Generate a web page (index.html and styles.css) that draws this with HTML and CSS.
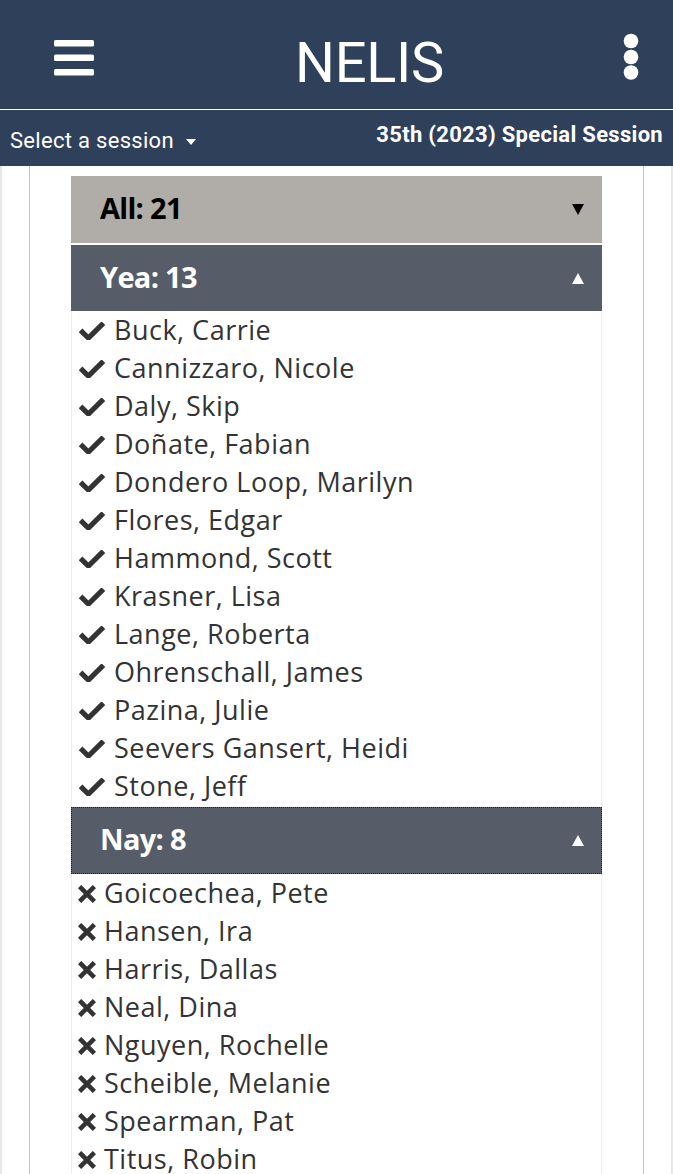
FILE: index.html
```html
<!DOCTYPE html>
<html>
<head>
<meta charset="utf-8">
<link rel="stylesheet" href="styles.css">
</head>
<body>
<header class="navbar">
  <button class="nav-btn menu" aria-label="menu">
    <svg width="40" height="38" viewBox="0 0 40 38"><rect x="0" y="1" width="40" height="6.5" rx="1.5" fill="#fff"/><rect x="0" y="15.5" width="40" height="6.5" rx="1.5" fill="#fff"/><rect x="0" y="30" width="40" height="6.5" rx="1.5" fill="#fff"/></svg>
  </button>
  <div class="brand">NELIS</div>
  <button class="nav-btn more" aria-label="more">
    <svg width="16" height="48" viewBox="0 0 16 48"><circle cx="8" cy="8" r="7.3" fill="#fff"/><circle cx="8" cy="24" r="7.3" fill="#fff"/><circle cx="8" cy="39.5" r="7.3" fill="#fff"/></svg>
  </button>
</header>
<div class="sessionbar">
  <div class="session-select">Select a session <span class="caret"></span></div>
  <div class="session-name">35th (2023) Special Session</div>
</div>
<div class="page">
  <div class="card">
    <div class="votes">
      <div class="vhead all"><span>All: 21</span><span class="tri down"></span></div>
      <div class="vhead open"><span>Yea: 13</span><span class="tri up"></span></div>
      <ul class="vlist yea">
        <li><svg class="ic-check" viewBox="0 0 28 18"><polyline points="2.6,8.4 10.4,16 25.4,1.2" fill="none" stroke="#333" stroke-width="5.2"/></svg>Buck, Carrie</li>
        <li><svg class="ic-check" viewBox="0 0 28 18"><polyline points="2.6,8.4 10.4,16 25.4,1.2" fill="none" stroke="#333" stroke-width="5.2"/></svg>Cannizzaro, Nicole</li>
        <li><svg class="ic-check" viewBox="0 0 28 18"><polyline points="2.6,8.4 10.4,16 25.4,1.2" fill="none" stroke="#333" stroke-width="5.2"/></svg>Daly, Skip</li>
        <li><svg class="ic-check" viewBox="0 0 28 18"><polyline points="2.6,8.4 10.4,16 25.4,1.2" fill="none" stroke="#333" stroke-width="5.2"/></svg>Doñate, Fabian</li>
        <li><svg class="ic-check" viewBox="0 0 28 18"><polyline points="2.6,8.4 10.4,16 25.4,1.2" fill="none" stroke="#333" stroke-width="5.2"/></svg>Dondero Loop, Marilyn</li>
        <li><svg class="ic-check" viewBox="0 0 28 18"><polyline points="2.6,8.4 10.4,16 25.4,1.2" fill="none" stroke="#333" stroke-width="5.2"/></svg>Flores, Edgar</li>
        <li><svg class="ic-check" viewBox="0 0 28 18"><polyline points="2.6,8.4 10.4,16 25.4,1.2" fill="none" stroke="#333" stroke-width="5.2"/></svg>Hammond, Scott</li>
        <li><svg class="ic-check" viewBox="0 0 28 18"><polyline points="2.6,8.4 10.4,16 25.4,1.2" fill="none" stroke="#333" stroke-width="5.2"/></svg>Krasner, Lisa</li>
        <li><svg class="ic-check" viewBox="0 0 28 18"><polyline points="2.6,8.4 10.4,16 25.4,1.2" fill="none" stroke="#333" stroke-width="5.2"/></svg>Lange, Roberta</li>
        <li><svg class="ic-check" viewBox="0 0 28 18"><polyline points="2.6,8.4 10.4,16 25.4,1.2" fill="none" stroke="#333" stroke-width="5.2"/></svg>Ohrenschall, James</li>
        <li><svg class="ic-check" viewBox="0 0 28 18"><polyline points="2.6,8.4 10.4,16 25.4,1.2" fill="none" stroke="#333" stroke-width="5.2"/></svg>Pazina, Julie</li>
        <li><svg class="ic-check" viewBox="0 0 28 18"><polyline points="2.6,8.4 10.4,16 25.4,1.2" fill="none" stroke="#333" stroke-width="5.2"/></svg>Seevers Gansert, Heidi</li>
        <li><svg class="ic-check" viewBox="0 0 28 18"><polyline points="2.6,8.4 10.4,16 25.4,1.2" fill="none" stroke="#333" stroke-width="5.2"/></svg>Stone, Jeff</li>
      </ul>
      <div class="vhead open focused"><span>Nay: 8</span><span class="tri up"></span></div>
      <ul class="vlist nay">
        <li><svg class="ic-x" viewBox="0 0 18 18"><path d="M3.2 3.2 L14.8 14.8 M14.8 3.2 L3.2 14.8" stroke="#333" stroke-width="4.6" stroke-linecap="square"/></svg>Goicoechea, Pete</li>
        <li><svg class="ic-x" viewBox="0 0 18 18"><path d="M3.2 3.2 L14.8 14.8 M14.8 3.2 L3.2 14.8" stroke="#333" stroke-width="4.6" stroke-linecap="square"/></svg>Hansen, Ira</li>
        <li><svg class="ic-x" viewBox="0 0 18 18"><path d="M3.2 3.2 L14.8 14.8 M14.8 3.2 L3.2 14.8" stroke="#333" stroke-width="4.6" stroke-linecap="square"/></svg>Harris, Dallas</li>
        <li><svg class="ic-x" viewBox="0 0 18 18"><path d="M3.2 3.2 L14.8 14.8 M14.8 3.2 L3.2 14.8" stroke="#333" stroke-width="4.6" stroke-linecap="square"/></svg>Neal, Dina</li>
        <li><svg class="ic-x" viewBox="0 0 18 18"><path d="M3.2 3.2 L14.8 14.8 M14.8 3.2 L3.2 14.8" stroke="#333" stroke-width="4.6" stroke-linecap="square"/></svg>Nguyen, Rochelle</li>
        <li><svg class="ic-x" viewBox="0 0 18 18"><path d="M3.2 3.2 L14.8 14.8 M14.8 3.2 L3.2 14.8" stroke="#333" stroke-width="4.6" stroke-linecap="square"/></svg>Scheible, Melanie</li>
        <li><svg class="ic-x" viewBox="0 0 18 18"><path d="M3.2 3.2 L14.8 14.8 M14.8 3.2 L3.2 14.8" stroke="#333" stroke-width="4.6" stroke-linecap="square"/></svg>Spearman, Pat</li>
        <li><svg class="ic-x" viewBox="0 0 18 18"><path d="M3.2 3.2 L14.8 14.8 M14.8 3.2 L3.2 14.8" stroke="#333" stroke-width="4.6" stroke-linecap="square"/></svg>Titus, Robin</li>
      </ul>
    </div>
  </div>
</div>
</body>
</html>
```
FILE: styles.css
```css
html, body {
  margin: 0;
  padding: 0;
  background: #fff;
}
body {
  font-family: "Open Sans", "Liberation Sans", sans-serif;
  color: #333;
  overflow: hidden;
}
.navbar {
  height: 109px;
  background: #2f405b;
  border-bottom: 1px solid #fff;
  display: flex;
  align-items: center;
  justify-content: space-between;
  padding: 0 34px 0 54px;
}
.nav-btn {
  background: none;
  border: 0;
  padding: 0;
  display: flex;
  cursor: pointer;
}
.menu { margin-top: 6px; }
.more { margin-top: 4px; }
.brand {
  font-family: Roboto, "Liberation Sans", sans-serif;
  font-size: 56px;
  color: #fff;
  letter-spacing: -0.3px;
  margin-left: 22px;
  margin-top: 16px;
}
.sessionbar {
  height: 56px;
  background: #2f405b;
  display: flex;
  justify-content: space-between;
  align-items: flex-start;
  padding: 0 10px 0 10px;
  font-family: Roboto, "Liberation Sans", sans-serif;
  color: #fff;
}
.session-select {
  font-size: 22px;
  letter-spacing: 0.3px;
  margin-top: 18px;
  display: flex;
  align-items: center;
}
.caret {
  display: inline-block;
  width: 0;
  height: 0;
  border-left: 5.5px solid transparent;
  border-right: 5.5px solid transparent;
  border-top: 6px solid #fff;
  margin-left: 12px;
  margin-top: 2px;
}
.session-name {
  font-size: 22px;
  font-weight: 700;
  letter-spacing: 0.3px;
  margin-top: 12px;
}
.page {
  border-left: 2px solid #e8e8e8;
  border-right: 2px solid #e8e8e8;
  min-height: 1010px;
}
.card {
  margin: 0 27px 0 27px;
  border-left: 1px solid #c4c4c4;
  border-right: 1px solid #c4c4c4;
  padding: 10px 41px 0 41px;
  min-height: 1010px;
}
.vhead {
  height: 67px;
  display: flex;
  align-items: center;
  justify-content: space-between;
  padding: 0 18px 0 29px;
  font-size: 29px;
  font-weight: 700;
  letter-spacing: -0.7px;
  box-sizing: border-box;
}
.vhead span:first-child { margin-top: -4px; }
.vhead.all {
  background: #b0aca8;
  color: #000;
  margin-bottom: 2px;
}
.vhead.open {
  background: #565d68;
  color: #fff;
  height: 66px;
}
.vhead.focused {
  outline: 1px dotted #222;
  outline-offset: -1px;
  margin-top: 2px;
  height: 67px;
}
.tri {
  width: 0;
  height: 0;
  border-left: 6px solid transparent;
  border-right: 6px solid transparent;
}
.tri.down { border-top: 11px solid #000; }
.tri.up { border-bottom: 11px solid #fff; }
.vlist {
  list-style: none;
  margin: 0;
  padding: 0;
  border-left: 1px solid #eee;
  border-right: 1px solid #eee;
}
.vlist li {
  height: 38px;
  line-height: 38px;
  font-size: 27px;
  letter-spacing: 0.5px;
  display: flex;
  align-items: center;
  padding-left: 6px;
  white-space: nowrap;
}
.ic-check {
  width: 28px;
  height: 18px;
  margin-right: 8px;
  margin-top: 1px;
}
.ic-x {
  width: 18px;
  height: 18px;
  margin-right: 8px;
  margin-top: 1px;
}
```
